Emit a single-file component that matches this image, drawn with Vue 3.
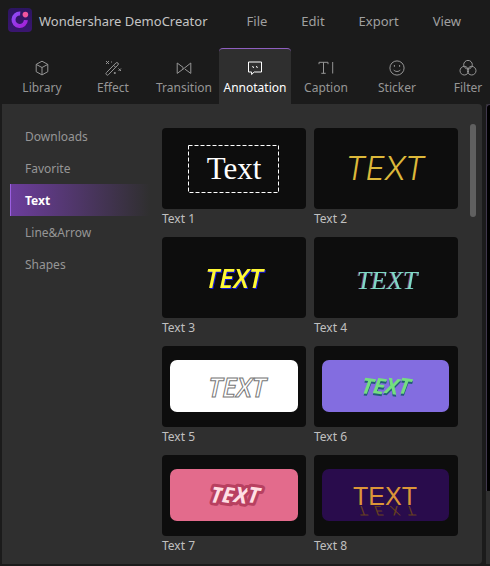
<script setup>
import { ref } from 'vue'

const menus = ['File', 'Edit', 'Export', 'View']
const tabs = ['Library', 'Effect', 'Transition', 'Annotation', 'Caption', 'Sticker', 'Filter']
const categories = ['Downloads', 'Favorite', 'Text', 'Line&Arrow', 'Shapes']

const activeTab = ref('Annotation')
const activeCategory = ref('Text')
</script>

<template>
  <div class="app">
    <header class="titlebar">
      <svg class="logo" viewBox="0 0 24 24">
        <defs>
          <linearGradient id="logoBg" x1="0" y1="0" x2="0" y2="1">
            <stop offset="0" stop-color="#2c1560" />
            <stop offset="1" stop-color="#3a1670" />
          </linearGradient>
          <linearGradient id="logoRing" x1="0" y1="0" x2="1" y2="1">
            <stop offset="0" stop-color="#8e4bf5" />
            <stop offset="1" stop-color="#a51fd8" />
          </linearGradient>
        </defs>
        <rect width="24" height="24" rx="4" fill="url(#logoBg)" />
        <path d="M12.2 5.6A6.2 6.2 0 1 0 17.9 12.2" fill="none" stroke="url(#logoRing)" stroke-width="4" />
        <circle cx="17.4" cy="6.6" r="2.8" fill="#f0559f" />
      </svg>
      <span class="title">Wondershare DemoCreator</span>
      <nav class="menu">
        <button v-for="menu in menus" :key="menu" type="button">{{ menu }}</button>
      </nav>
    </header>

    <nav class="tabs">
      <button
        v-for="tab in tabs"
        :key="tab"
        type="button"
        class="tab"
        :class="{ active: tab === activeTab }"
        @click="activeTab = tab"
      >
        <svg class="icon" viewBox="0 0 18 18">
          <g v-if="tab === 'Library'">
            <path d="M9 2.2l5.8 3.2v7.3L9 15.9l-5.8-3.2V5.4z" />
            <path d="M3.2 5.4L9 8.5l5.8-3.1M9 8.5v7.4" />
          </g>
          <g v-if="tab === 'Effect'">
            <path d="M2.4 13.6L11.9 4a1.4 1.4 0 0 1 2 0 1.4 1.4 0 0 1 0 2L4.5 15.6a1.4 1.4 0 0 1-2.1 0 1.4 1.4 0 0 1 0-2zM9.6 6.3l2 2" />
            <path d="M2 2l3 3M5 2L2 5M14.5 9.5l2.5 2.5M17 9.5L14.5 12" />
            <path d="M10.8 13v2M9.8 14h2M7.5 2.5v1" />
          </g>
          <g v-if="tab === 'Transition'">
            <path d="M2.2 4v10.4L8 10.2V8.3zM15.8 4v10.4L10 10.2M8 10.2L15.8 4" />
          </g>
          <g v-if="tab === 'Annotation'">
            <path d="M2.5 3h13v10H8.2L5.6 15.5V13H2.5z" />
            <path d="M6.6 7l1 2M10.4 7l1 2" />
          </g>
          <g v-if="tab === 'Caption'">
            <path d="M2 5.2V3.3h9v1.9M6.5 3.3v11M4.3 14.3h4.4M15.7 3v11.5" />
          </g>
          <g v-if="tab === 'Sticker'">
            <circle cx="9" cy="9" r="7.1" />
            <path d="M6.4 6v1.8M11.6 6v1.8M5.6 10.8c1.4 2.2 5.4 2.2 6.8 0" />
          </g>
          <g v-if="tab === 'Filter'">
            <circle cx="9" cy="5.7" r="4.3" />
            <circle cx="5.3" cy="11.7" r="4.3" />
            <circle cx="12.7" cy="11.7" r="4.3" />
          </g>
        </svg>
        <span>{{ tab }}</span>
      </button>
    </nav>

    <div class="workspace">
      <main class="panel">
        <aside class="sidebar">
          <button
            v-for="category in categories"
            :key="category"
            type="button"
            class="category"
            :class="{ active: category === activeCategory }"
            @click="activeCategory = category"
          >
            {{ category }}
          </button>
        </aside>

        <section class="grid">
          <figure v-for="n in 8" :key="n" class="card">
            <svg class="thumb" viewBox="0 0 144 81">
              <g v-if="n === 1">
                <rect x="26.5" y="17.5" width="90" height="47" fill="none" stroke="#fff" stroke-dasharray="4 2" />
                <text x="72" y="51" class="serif">Text</text>
              </g>
              <text v-if="n === 2" x="71" y="52" class="thin">TEXT</text>
              <text v-if="n === 3" x="72" y="51" class="bold">TEXT</text>
              <text v-if="n === 4" x="73" y="52" class="script">TEXT</text>
              <g v-if="n === 5">
                <rect x="8" y="14" width="128" height="52" rx="7" fill="#fff" />
                <text x="75" y="51" class="outline">TEXT</text>
              </g>
              <g v-if="n === 6">
                <rect x="8" y="14" width="127" height="52" rx="7" fill="#836de0" />
                <text x="71" y="47" rotate="8" class="brush green">TEXT</text>
              </g>
              <g v-if="n === 7">
                <rect x="8" y="14" width="128" height="52" rx="7" fill="#e36b8c" />
                <text x="72" y="47" rotate="8" class="brush cream">TEXT</text>
              </g>
              <g v-if="n === 8">
                <rect x="8" y="14" width="127" height="52" rx="7" fill="#290c4c" />
                <text x="71" y="50" class="plain">TEXT</text>
                <!-- reflection on the floor under the word -->
                <g transform="translate(43 51) skewX(20) scale(1 -1)">
                  <text x="0 16 32 48" y="0" class="mirror">TEXT</text>
                </g>
              </g>
            </svg>
            <figcaption>Text {{ n }}</figcaption>
          </figure>
        </section>

        <div class="scrollbar"></div>
      </main>
      <aside class="preview">
        <div class="screen"></div>
      </aside>
    </div>
  </div>
</template>

<style>
body {
  background: #1b1b1b;
}
</style>

<style scoped>
.app {
  min-height: 100vh;
  overflow: hidden;
  background: #1b1b1b;
  color: #969696;
  font-family: "Noto Sans", "Open Sans", sans-serif;
  font-size: 12px;
}

button {
  padding: 0;
  border: 0;
  background: none;
  color: inherit;
  font: inherit;
  white-space: nowrap;
}

.titlebar {
  display: flex;
  align-items: center;
  height: 40px;
  padding-left: 8px;
}

.logo {
  width: 24px;
  height: 24px;
  margin-right: 7px;
}

.title,
.menu {
  padding-top: 2px;
  font-size: 13px;
  line-height: 20px;
}

.title {
  color: #c4c4c4;
  white-space: nowrap;
}

.menu {
  display: flex;
  gap: 34px;
  margin-left: 39px;
  color: #a0a0a0;
}

.tabs {
  display: flex;
  height: 56px;
  margin-top: 8px;
  padding-left: 6px;
}

.tab {
  display: flex;
  flex: none;
  flex-direction: column;
  align-items: center;
  gap: 2px;
  width: 72px;
  margin-right: -1px;
  padding-top: 10px;
  border-top: 1px solid transparent;
  border-radius: 4px 4px 0 0;
  line-height: 18px;
}

.tab.active {
  border-top-color: #8f5fc0;
  background: #2f2f2f;
  color: #fff;
}

.icon {
  width: 18px;
  height: 18px;
  fill: none;
  stroke: currentColor;
  stroke-width: 1;
}

.workspace {
  display: flex;
  gap: 4px;
  padding: 0 0 2px 2px;
}

.panel {
  display: flex;
  flex: 1;
  min-width: 0;
  padding: 0 6px 8px 8px;
  border-radius: 0 4px 4px 0;
  background: #2f2f2f;
}

.sidebar {
  display: flex;
  flex: none;
  flex-direction: column;
  width: 140px;
  margin-right: 12px;
  padding-top: 16px;
}

.category {
  height: 32px;
  padding-left: 14px;
  border-left: 1px solid transparent;
  text-align: left;
}

.category.active {
  border-left-color: #9a5fe0;
  background: linear-gradient(90deg, #6c3d9c, #2f2f2f);
  color: #fff;
  font-weight: 700;
}

.grid {
  display: grid;
  flex: 1;
  grid-template-columns: repeat(auto-fill, 144px);
  gap: 8px;
  padding-top: 24px;
}

.card {
  margin: 0;
}

.thumb {
  display: block;
  width: 144px;
  height: 81px;
  border-radius: 4px;
  background: #0d0d0d;
}

figcaption {
  color: #c0c0c0;
  line-height: 20px;
}

.scrollbar {
  width: 6px;
  height: 93px;
  margin-top: 20px;
  border-radius: 3px;
  background: #606060;
}

.preview {
  width: 4px;
  background: #2f2f2f;
}

.screen {
  height: 387px;
  box-sizing: border-box;
  border: 1px solid #40384c;
  border-width: 1px 0 0 1px;
  border-radius: 4px 0 0 0;
  background: #000;
}

text {
  text-anchor: middle;
}

.serif {
  fill: #fff;
  font: 31px "Liberation Serif", serif;
}

.thin {
  fill: #dcb83a;
  font: italic 300 32px Inter, sans-serif;
}

.bold {
  fill: #fff834;
  filter: drop-shadow(1px 1px 0 #1212d8);
  font: italic 600 27px "Open Sans", sans-serif;
}

.script {
  fill: #7fd8c4;
  filter: drop-shadow(-1px 0 0 #6a4080);
  font: italic 26px "Liberation Serif", serif;
}

.outline {
  fill: #fff;
  stroke: #777;
  stroke-width: 1;
  font: italic 600 27px "Open Sans", sans-serif;
}

.brush {
  font: italic 700 22px "Open Sans", sans-serif;
}

.green {
  fill: #74de80;
  filter: drop-shadow(0 2px 0 #235c78);
}

.cream {
  fill: #ffdfe4;
  stroke: #b84060;
  stroke-width: 6;
  stroke-linejoin: round;
  paint-order: stroke;
}

.plain {
  fill: #dc9638;
  font: 25px "Liberation Sans", sans-serif;
}

.mirror {
  fill: #67401f;
  font: 13px "DejaVu Sans", sans-serif;
  text-anchor: start;
}
</style>
